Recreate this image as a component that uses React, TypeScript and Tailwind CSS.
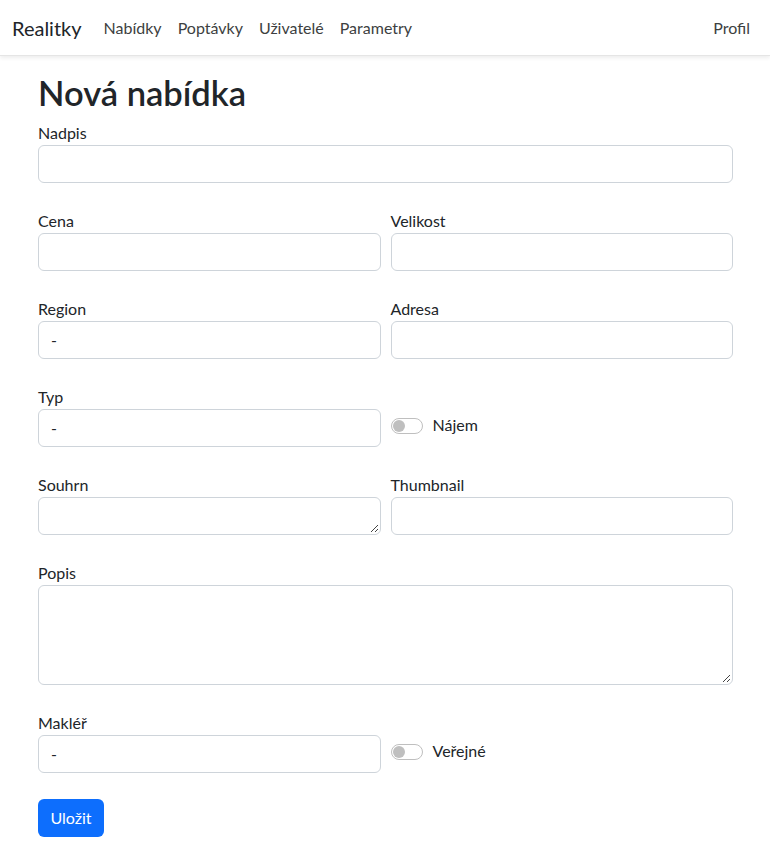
import React from "react";

const font = { fontFamily: '"Segoe UI", Lato, "Noto Sans", "Liberation Sans", sans-serif' };

function Label({ children }: { children: React.ReactNode }) {
  return <label className="block text-[16px] leading-[24px] text-[#212529]">{children}</label>;
}

function Input() {
  return <div className="h-[38px] w-full rounded-[6px] border border-[#ced4da] bg-white" />;
}

function SelectBox() {
  return (
    <div className="flex h-[38px] w-full items-center rounded-[6px] border border-[#ced4da] bg-white px-[12px] text-[16px] text-[#212529]">
      -
    </div>
  );
}

function TextArea({ h }: { h: string }) {
  return (
    <div className={`relative w-full rounded-[6px] border border-[#ced4da] bg-white ${h}`}>
      <svg className="absolute bottom-[1px] right-[1px]" width="9" height="9" viewBox="0 0 9 9">
        <line x1="8" y1="1" x2="1" y2="8" stroke="#444" strokeWidth="1" />
        <line x1="8" y1="5" x2="5" y2="8" stroke="#444" strokeWidth="1" />
      </svg>
    </div>
  );
}

function Switch({ label }: { label: string }) {
  return (
    <div className="flex items-center pt-[17px] leading-[24px]">
      <div className="relative mt-[2px] h-[16px] w-[32px] rounded-full border border-[#bfbfbf] bg-white">
        <div className="absolute left-[1px] top-[1px] h-[12px] w-[12px] rounded-full bg-[#bfbfbf]" />
      </div>
      <span className="ml-[10px] text-[16px] text-[#212529]">{label}</span>
    </div>
  );
}

export default function App() {
  return (
    <div className="min-h-screen bg-white text-[#212529]" style={font}>
      <nav className="flex h-[56px] items-center border-b border-[#e5e5e5] px-[12px] shadow-[0_2px_4px_rgba(0,0,0,0.075)]">
        <span className="mr-[14px] text-[20px] leading-[30px] text-[#212529]">Realitky</span>
        <div className="flex text-[16px] leading-[24px] text-[#3d3f41]">
          <span className="px-[8px]">Nabídky</span>
          <span className="px-[8px]">Poptávky</span>
          <span className="px-[8px]">Uživatelé</span>
          <span className="px-[8px]">Parametry</span>
        </div>
        <span className="ml-auto px-[8px] text-[16px] leading-[24px] text-[#3d3f41]">Profil</span>
      </nav>
      <div className="mx-auto mt-[16px] w-[696px] pl-[1px]">
        <h1 className="mb-[8px] text-[34.5px] font-semibold leading-[41px] text-[#212529]">Nová nabídka</h1>
        <div>
          <Label>Nadpis</Label>
          <Input />
        </div>
        <div className="mt-[26px] grid grid-cols-2 gap-x-[10px]">
          <div>
            <Label>Cena</Label>
            <Input />
          </div>
          <div>
            <Label>Velikost</Label>
            <Input />
          </div>
        </div>
        <div className="mt-[26px] grid grid-cols-2 gap-x-[10px]">
          <div>
            <Label>Region</Label>
            <SelectBox />
          </div>
          <div>
            <Label>Adresa</Label>
            <Input />
          </div>
        </div>
        <div className="mt-[26px] grid grid-cols-2 gap-x-[10px]">
          <div>
            <Label>Typ</Label>
            <SelectBox />
          </div>
          <Switch label="Nájem" />
        </div>
        <div className="mt-[26px] grid grid-cols-2 gap-x-[10px]">
          <div>
            <Label>Souhrn</Label>
            <TextArea h="h-[38px]" />
          </div>
          <div>
            <Label>Thumbnail</Label>
            <Input />
          </div>
        </div>
        <div className="mt-[26px]">
          <Label>Popis</Label>
          <TextArea h="h-[100px]" />
        </div>
        <div className="mt-[26px] grid grid-cols-2 gap-x-[10px]">
          <div>
            <Label>Makléř</Label>
            <SelectBox />
          </div>
          <Switch label="Veřejné" />
        </div>
        <button className="mt-[26px] h-[38px] w-[66px] rounded-[6px] bg-[#0d6efd] text-[16px] text-white">
          Uložit
        </button>
      </div>
    </div>
  );
}
